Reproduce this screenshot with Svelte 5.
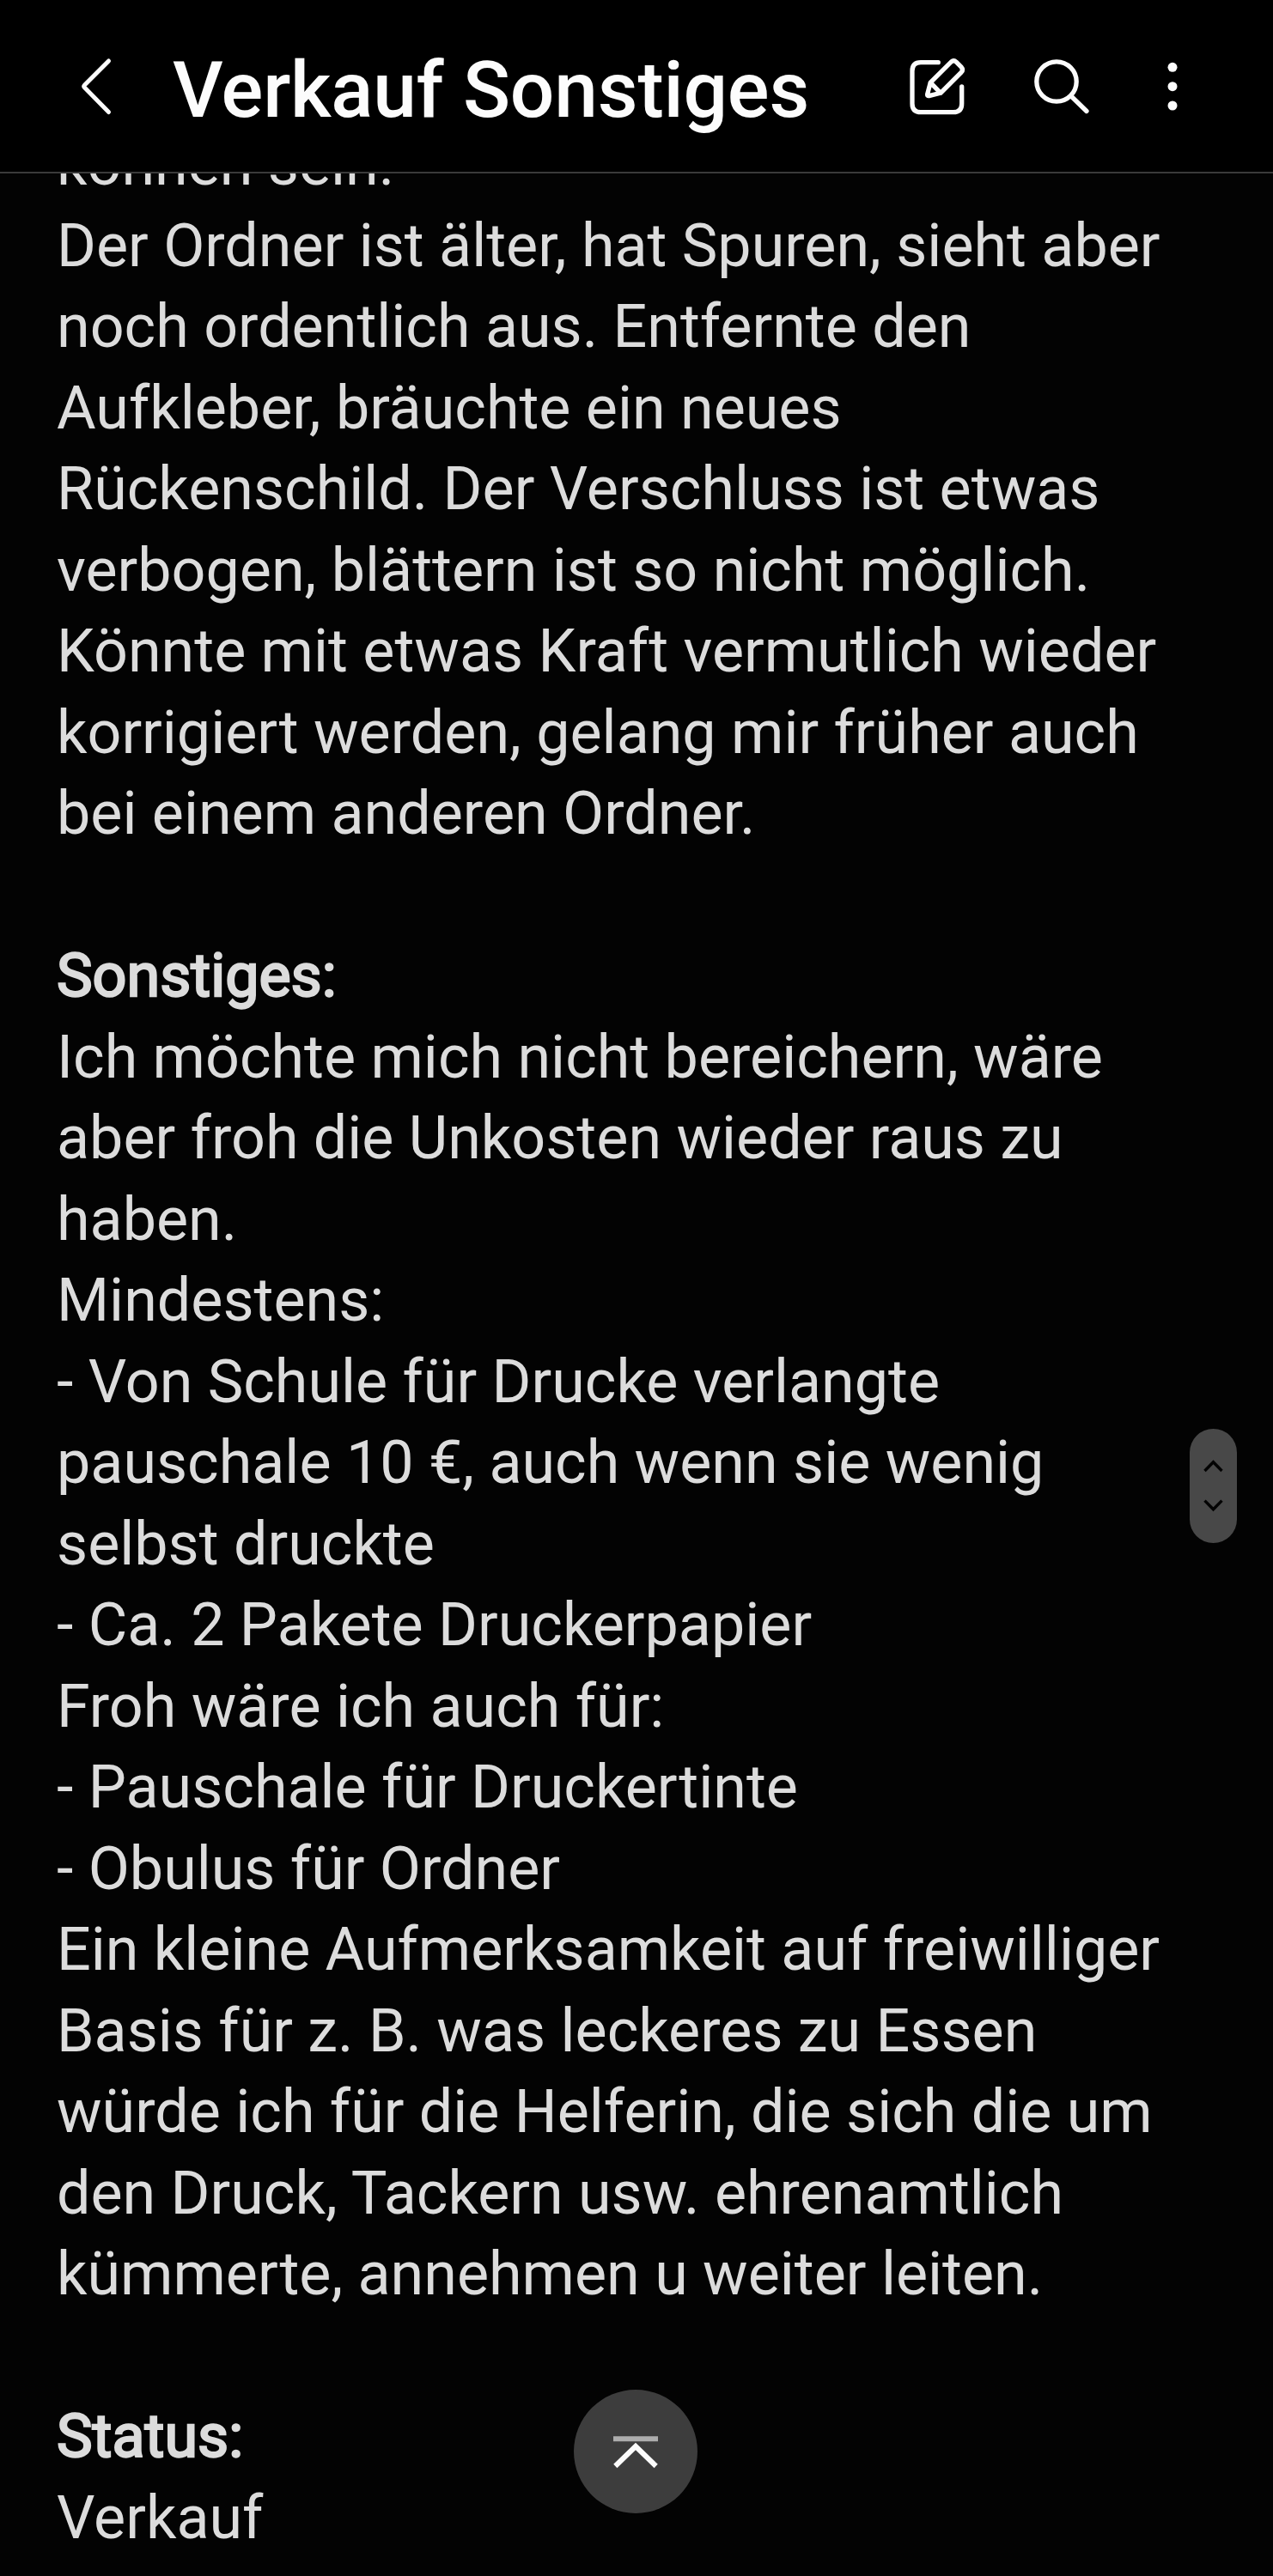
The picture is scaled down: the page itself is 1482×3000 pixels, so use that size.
<script>
  const title = 'Verkauf Sonstiges';

  const sections = [
    {
      lines: [
        'können sein.',
        'Der Ordner ist älter, hat Spuren, sieht aber',
        'noch ordentlich aus. Entfernte den',
        'Aufkleber, bräuchte ein neues',
        'Rückenschild. Der Verschluss ist etwas',
        'verbogen, blättern ist so nicht möglich.',
        'Könnte mit etwas Kraft vermutlich wieder',
        'korrigiert werden, gelang mir früher auch',
        'bei einem anderen Ordner.'
      ]
    },
    {
      heading: 'Sonstiges:',
      lines: [
        'Ich möchte mich nicht bereichern, wäre',
        'aber froh die Unkosten wieder raus zu',
        'haben.',
        'Mindestens:',
        '- Von Schule für Drucke verlangte',
        'pauschale 10 €, auch wenn sie wenig',
        'selbst druckte',
        '- Ca. 2 Pakete Druckerpapier',
        'Froh wäre ich auch für:',
        '- Pauschale für Druckertinte',
        '- Obulus für Ordner',
        'Ein kleine Aufmerksamkeit auf freiwilliger',
        'Basis für z. B. was leckeres zu Essen',
        'würde ich für die Helferin, die sich die um',
        'den Druck, Tackern usw. ehrenamtlich',
        'kümmerte, annehmen u weiter leiten.'
      ]
    },
    {
      heading: 'Status:',
      lines: ['Verkauf']
    }
  ];
</script>

<div class="screen">
  <header class="toolbar">
    <svg class="back" viewBox="0 0 44 72" width="44" height="72">
      <path d="M38.5 7 L10.5 35 Q9 36.5 10.5 38 L38.5 66.5" />
    </svg>
    <h1>{title}</h1>
    <div class="actions">
      <svg viewBox="0 0 72 72" width="72" height="72">
        <path d="M38.3 8.7 H18 Q8 8.7 8 18.7 V56.7 Q8 66.7 18 66.7 H55.7 Q65.7 66.7 65.7 56.7 V37" />
        <path d="M29.2 32.2 L53.4 8 Q56.3 5.5 59.2 8.1 L65.2 14.2 Q67.8 17.2 65.2 20.1 L41 44.3 L27.5 47.6 Q25.4 48 25.6 45.9 L29.2 32.2 L41 44.3" />
      </svg>
      <svg class="search" viewBox="0 0 72 72" width="72" height="72">
        <circle cx="32" cy="31" r="23.2" />
        <path d="M49 48 L67 65.5" />
      </svg>
      <svg class="more" viewBox="0 0 24 72" width="24" height="72">
        <circle cx="12" cy="14.3" r="5.5" />
        <circle cx="12" cy="36.7" r="5.5" />
        <circle cx="12" cy="59" r="5.5" />
      </svg>
    </div>
  </header>

  <main class="note">
    {#each sections as section}
      <section>
        {#if section.heading}
          <h2>{section.heading}</h2>
        {/if}
        {#each section.lines as line}
          <p>{line}</p>
        {/each}
      </section>
    {/each}
  </main>

  <div class="scroll-handle">
    <svg viewBox="0 0 55 133" width="55" height="133">
      <path d="M17.5 49 L27.5 38.8 L37.5 49" />
      <path d="M17.5 83.6 L27.5 93.8 L37.5 83.6" />
    </svg>
  </div>

  <button class="to-top" aria-label="Nach oben">
    <svg viewBox="0 0 144 144" width="144" height="144">
      <path class="bar" d="M46 57.3 H98" />
      <path d="M48.3 89 L72 66 L95.7 89" />
    </svg>
  </button>
</div>

<style>
  :global(body) {
    margin: 0;
    background: #030303;
  }

  .screen {
    position: relative;
    width: 1482px;
    height: 3000px;
    overflow: hidden;
    background: #030303;
    font-family: Roboto, "Noto Sans", sans-serif;
    color: #dcdcdc;
  }

  .toolbar {
    display: flex;
    align-items: center;
    box-sizing: border-box;
    height: 202px;
    padding: 0 105px 0 88px;
    border-bottom: 2px solid #3a3a3a;
    background: #000;
  }

  svg {
    display: block;
    flex: none;
    fill: none;
    stroke: #fcfcfc;
    stroke-width: 5.3;
    stroke-linecap: round;
    stroke-linejoin: round;
  }

  .back {
    stroke-width: 5;
  }

  h1 {
    margin: 10px 0 0 69px;
    font-size: 91px;
    font-weight: 500;
    line-height: 120px;
    letter-spacing: -0.2px;
    color: #fcfcfc;
    white-space: nowrap;
  }

  .actions {
    display: flex;
    gap: 72px;
    margin-left: auto;
  }

  .search {
    margin-right: 11px;
  }

  .more {
    fill: #fcfcfc;
    stroke: none;
  }

  .note {
    height: 2798px;
    overflow: hidden;
  }

  section {
    padding: 0 66px;
    margin-bottom: 94.5px;
  }

  /* the note is scrolled, its top line sits half under the toolbar */
  section:first-child {
    margin-top: -57.7px;
  }

  h2,
  p {
    margin: 0;
    font-size: 70px;
    font-weight: 400;
    line-height: 94.5px;
    white-space: nowrap;
  }

  h2 {
    -webkit-text-stroke: 2.4px #dcdcdc;
  }

  .scroll-handle {
    position: absolute;
    top: 1664px;
    right: 42px;
    width: 55px;
    height: 133px;
    border-radius: 28px;
    background: #484848;
  }

  .scroll-handle svg {
    stroke: #030303;
    stroke-width: 3.4;
    stroke-linecap: butt;
    stroke-linejoin: miter;
  }

  .to-top {
    position: absolute;
    left: 668px;
    top: 2783px;
    width: 144px;
    height: 144px;
    padding: 0;
    border: none;
    border-radius: 50%;
    background: #3d3d3d;
  }

  .to-top svg {
    stroke-width: 6;
    stroke-linecap: butt;
    stroke-linejoin: miter;
  }

  .to-top .bar {
    stroke: #adadad;
  }
</style>
